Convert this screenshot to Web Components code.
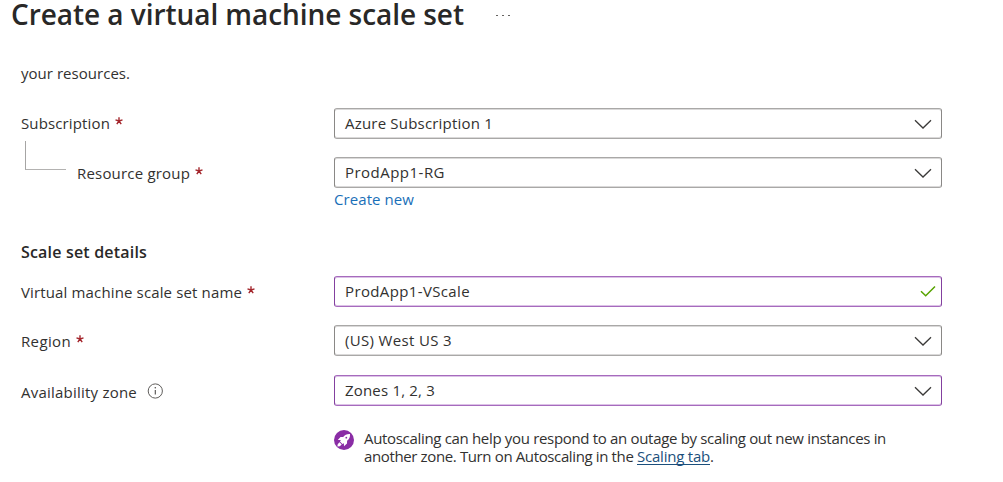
<!DOCTYPE html>
<html lang="en">
<head>
<meta charset="utf-8">
<title>Create a virtual machine scale set</title>
<style>
body{margin:0;background:#fff}
</style>
</head>
<body>
<scale-set-page></scale-set-page>
<script>
const define = (name, html, setup) => customElements.define(name, class extends HTMLElement {
  connectedCallback() {
    if (this.shadowRoot) return;
    const t = document.createElement('template');
    t.innerHTML = html;
    this.attachShadow({mode: 'open'}).append(t.content.cloneNode(true));
    if (setup) setup(this, this.shadowRoot);
  }
});

// A single line of text tracked so that it fills the width given in its "w" attribute.
define('tracked-text', `<style>:host{display:inline-block;white-space:pre}span{display:inline-block}:host([underlined]) span{text-decoration:underline;text-underline-offset:2px;text-decoration-skip-ink:none}</style><span><slot></slot></span>`, (el, root) => {
  const span = root.querySelector('span');
  const n = el.textContent.length;
  const natural = span.getBoundingClientRect().width;
  span.style.letterSpacing = ((+el.getAttribute('w') - natural) / n).toFixed(3) + 'px';
});

define('required-mark', `<style>:host{display:block;width:8px;height:8px;margin-left:5px;margin-top:-4px}svg{display:block}</style>
<svg width="8" height="8" viewBox="0 0 8 8" fill="none" stroke="#a4262c" stroke-width="1.4"><path d="M4 .2V4M4 4 .5 2.9M4 4l3.5-1.1M4 4 1.8 7.2M4 4l2.2 3.2"/></svg>`);

define('info-icon', `<style>:host{display:block;width:16px;height:16px;margin-left:10px;margin-top:-3px}svg{display:block}</style>
<svg width="16" height="16" viewBox="0 0 16 16"><circle cx="8.300" cy="8" r="7.100" fill="none" stroke="#605e5c"/><path d="M8.300 7v4.600" stroke="#504e4c" stroke-width="1.1"/><circle cx="8.300" cy="4.8" r=".8" fill="#504e4c"/></svg>`);

define('rocket-badge', `<style>:host{display:block;width:20px;height:20px}svg{display:block}</style>
<svg width="20" height="20" viewBox="0 0 20 20"><circle cx="10" cy="10" r="10" fill="#8a2da5"/><g fill="#fff"><path d="M16 4c-3-.2-5.200.9-6.800 2.900L6.500 7 3.800 10l3 .1-.8 1.500 2.400 2.400 1.500-.8.1 3 3-2.800.1-2.600c2.100-1.600 3.100-3.700 2.900-6.800z"/><path d="M5.500 12.300 3.700 14.200l-.3 2.400 2.400-.3 1.900-1.800z"/></g><circle cx="12.300" cy="7.700" r=".9" fill="#8a2da5"/></svg>`);

define('form-row', `<style>
:host{display:grid;grid-template-columns:313px 608px;height:31px}
.label{display:flex;align-items:center;height:30px;padding-top:var(--drop,0px)}
</style><div class="label"><slot name="label"></slot></div><slot></slot>`);

define('field-box', `<style>
:host{display:flex;box-sizing:border-box;justify-content:space-between;align-items:center;height:31px;padding:0 9px 0 10px;border-radius:3px;
border:1px solid #8a8886;border-top-color:#a9a8a7;border-bottom-color:#a9a8a7;box-shadow:inset 0 1px #dad9d9,inset 0 -1px #dad9d9;background:#fff}
:host([edited]){border-color:#a66bbd #83409f;box-shadow:inset 0 1px #dcc2e7,inset 0 -1px #dcc2e7}
.text{padding-bottom:2px}
svg{display:none;width:18px;height:12px;fill:none;stroke-width:1.3}
.chev{display:block;stroke:#3b3a39}
:host([valid]) .chev{display:none}
:host([valid]) .check{display:block;width:16px;margin-right:-4px;margin-top:-2px;stroke:#57a300;stroke-width:1.500}
</style><div class="text"><slot></slot></div>
<svg class="chev" viewBox="0 0 18 12"><path d="M1 2.200 9 10l8-7.800"/></svg>
<svg class="check" viewBox="0 0 16 12"><path d="M1 6.200 5.700 10.800 15 1.500"/></svg>`);

define('tree-branch', `<style>:host{display:block;box-sizing:border-box;width:41px;height:29px;margin-left:4px;margin-right:11px;border-left:1px solid #a6a5a4;border-bottom:1px solid #b3b2b1;margin-top:-35px}</style>`);

define('page-title', `<style>
:host{display:flex;height:28px;padding-left:11px;align-items:center;font-size:28px;line-height:28px;font-weight:600;color:#292827}
.more{display:flex;gap:4.500px;margin-left:32px;margin-top:3px}
i{width:1.700px;height:1.700px;background:#504e4c;border-radius:50%}
</style><slot></slot><div class="more"><i></i><i></i><i></i></div>`);

define('scale-set-page', `<style>
:host{display:flex;flex-direction:column;height:482px;font-family:"Open Sans","Noto Sans",sans-serif;font-size:15px;line-height:20px;color:#323130}
main{display:flex;flex-direction:column;padding-left:21px}
.intro{margin-top:35px;height:20px}
.r1{margin-top:25px}.r2{margin-top:18px;--drop:1px}
.new{margin:1px 0 0 313px;height:20px;color:#1a6fb8}
h2{margin:32px 0 0;font-size:16px;font-weight:600;line-height:22px;height:22px;color:#292827}
.r3{margin-top:13px;--drop:1px}.r4{margin-top:18px;--drop:1px}.r5{margin-top:19px;--drop:2px}
.tip{display:flex;margin:23px 0 0 313px;gap:10px}
.tip p{margin:0;line-height:18px;display:flex;flex-direction:column}
.tip rocket-badge{margin-top:1px}
.line{display:flex}
a{color:#1b4f7c}
</style>
<page-title><tracked-text w="453">Create a virtual machine scale set</tracked-text></page-title>
<main>
<div class="intro"><tracked-text w="109">your resources.</tracked-text></div>
<form-row class="r1"><tracked-text slot="label" w="89">Subscription</tracked-text><required-mark slot="label"></required-mark>
<field-box><tracked-text w="148">Azure Subscription 1</tracked-text></field-box></form-row>
<form-row class="r2"><tree-branch slot="label"></tree-branch><tracked-text slot="label" w="113">Resource group</tracked-text><required-mark slot="label"></required-mark>
<field-box><tracked-text w="100">ProdApp1-RG</tracked-text></field-box></form-row>
<div class="new"><tracked-text w="80">Create new</tracked-text></div>
<h2><tracked-text w="126">Scale set details</tracked-text></h2>
<form-row class="r3"><tracked-text slot="label" w="221">Virtual machine scale set name</tracked-text><required-mark slot="label"></required-mark>
<field-box edited valid><tracked-text w="125">ProdApp1-VScale</tracked-text></field-box></form-row>
<form-row class="r4"><tracked-text slot="label" w="50">Region</tracked-text><required-mark slot="label"></required-mark>
<field-box><tracked-text w="107">(US) West US 3</tracked-text></field-box></form-row>
<form-row class="r5"><tracked-text slot="label" w="116">Availability zone</tracked-text><info-icon slot="label"></info-icon>
<field-box edited><tracked-text w="90">Zones 1, 2, 3</tracked-text></field-box></form-row>
<div class="tip"><rocket-badge></rocket-badge><p><span class="line"><tracked-text w="522">Autoscaling can help you respond to an outage by scaling out new instances in</tracked-text></span><span class="line"><tracked-text w="273">another zone. Turn on Autoscaling in the </tracked-text><a><tracked-text underlined w="73">Scaling tab</tracked-text></a><tracked-text w="4">.</tracked-text></span></p></div>
</main>`);
</script>
</body>
</html>
